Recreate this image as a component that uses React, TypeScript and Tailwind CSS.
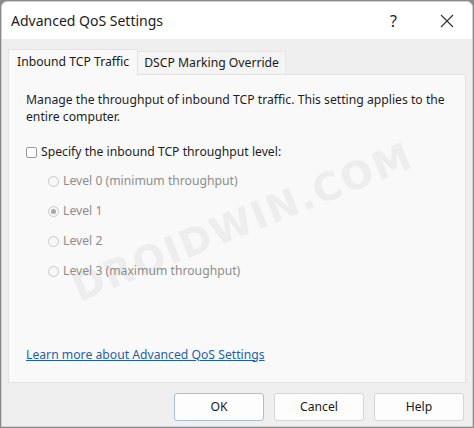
import React from 'react';

const levels = [
  { label: 'Level 0 (minimum throughput)', checked: false },
  { label: 'Level 1', checked: true },
  { label: 'Level 2', checked: false },
  { label: 'Level 3 (maximum throughput)', checked: false },
];

function Radio({ checked }: { checked: boolean }) {
  return (
    <span className="w-[11px] h-[11px] rounded-full border border-[#c8c8c8] bg-[#f7f7f7] flex items-center justify-center shrink-0">
      {checked && <span className="w-[5px] h-[5px] rounded-full bg-[#a8a8a8]" />}
    </span>
  );
}

export default function App() {
  return (
    <div className="w-[474px] h-[428px] bg-[#8a8a8a] overflow-hidden" style={{ fontFamily: '"Noto Sans", "Open Sans", sans-serif' }}>
      <div className="w-[472px] h-[426px] mt-[1px] ml-[1px] rounded-t-[6px] border border-[#cfcfcf] bg-[#efefef] flex flex-col relative">
        {/* Title bar */}
        <div className="h-[37px] bg-white flex items-center pl-[9px] rounded-t-[6px] shrink-0">
          <span className="text-[14px] text-[#1c1c1c]">Advanced QoS Settings</span>
          <span className="ml-auto text-[16px] text-[#222] mr-[43px]">?</span>
          <svg width="14" height="14" viewBox="0 0 14 14" className="mr-[18px]">
            <path d="M1 1 L13 13 M13 1 L1 13" stroke="#333" strokeWidth="1.2" fill="none" />
          </svg>
        </div>

        {/* Tabs */}
        <div className="flex items-end pl-[6px] mt-[9px] h-[26px]">
          <div className="h-[26px] px-[8px] bg-[#f9f9f9] border border-b-0 border-[#e2e2e2] flex items-center text-[12.2px] text-[#1a1a1a] relative z-10 -mb-px">
            Inbound TCP Traffic
          </div>
          <div className="h-[23px] px-[6px] bg-[#f4f4f4] border border-l-0 border-b-0 border-[#e6e6e6] flex items-center text-[12.2px] text-[#1a1a1a]">
            DSCP Marking Override
          </div>
        </div>

        {/* Panel */}
        <div className="mx-[6px] h-[309px] bg-[#f9f9f9] border border-[#e2e2e2] relative overflow-hidden">
          {/* watermark */}
          <div className="absolute inset-0 flex items-center justify-center pb-[12px] pl-[12px] pointer-events-none select-none">
            <div className="text-[38px] font-bold text-[#ededed] tracking-[2px] -rotate-[22deg]" style={{ fontFamily: '"DejaVu Sans", sans-serif' }}>
              DROIDWIN.COM
            </div>
          </div>

          <div className="relative h-full flex flex-col pl-[17px] pt-[16px] text-[12.2px] text-[#1e1e1e]">
            <p className="leading-[17px] pr-[6px]">
              Manage the throughput of inbound TCP traffic. This setting applies to the entire computer.
            </p>
            <div className="flex items-center gap-[4px] mt-[19px] h-[17px]">
              <span className="w-[11px] h-[11px] border border-[#9a9a9a] rounded-[2px] bg-white" />
              <span>Specify the inbound TCP throughput level:</span>
            </div>
            <div className="flex flex-col pl-[22px] mt-[12px] gap-[13px] text-[#8d8d8d]">
              {levels.map(l => (
                <div key={l.label} className="flex items-center gap-[4px] h-[17px]">
                  <Radio checked={l.checked} />
                  <span>{l.label}</span>
                </div>
              ))}
            </div>
            <a className="mt-auto mb-[18px] text-[#1f5fa8] underline w-max">Learn more about Advanced QoS Settings</a>
          </div>
        </div>

        {/* Buttons */}
        <div className="flex justify-end gap-[10px] pr-[8px] mt-[10px]">
          <button className="w-[90px] h-[28px] bg-[#fdfdfd] border border-[#a9c0d8] rounded-[3px] text-[12.2px] text-[#1a1a1a]">OK</button>
          <button className="w-[90px] h-[28px] bg-[#fdfdfd] border border-[#d6d6d6] rounded-[3px] text-[12.2px] text-[#1a1a1a]">Cancel</button>
          <button className="w-[90px] h-[28px] bg-[#fdfdfd] border border-[#d6d6d6] rounded-[3px] text-[12.2px] text-[#1a1a1a]">Help</button>
        </div>
      </div>
    </div>
  );
}
